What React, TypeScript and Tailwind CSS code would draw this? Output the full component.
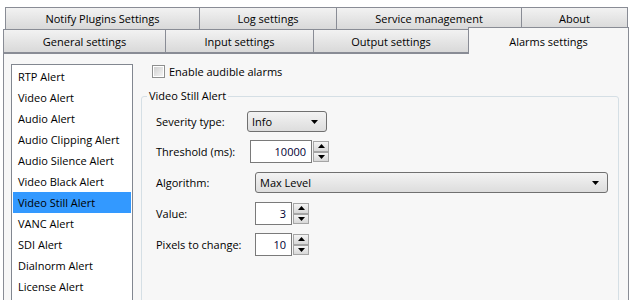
import React from "react";

const TOP_TABS = [
  { label: "Notify Plugins Settings", w: "w-[195px]" },
  { label: "Log settings", w: "w-[138px]" },
  { label: "Service management", w: "w-[186px]" },
  { label: "About", w: "w-[107px]" },
];

const BOTTOM_TABS = [
  { label: "General settings", w: "w-[163px]" },
  { label: "Input settings", w: "w-[149px]" },
  { label: "Output settings", w: "w-[156px]" },
];

const ALERTS = [
  "RTP Alert",
  "Video Alert",
  "Audio Alert",
  "Audio Clipping Alert",
  "Audio Silence Alert",
  "Video Black Alert",
  "Video Still Alert",
  "VANC Alert",
  "SDI Alert",
  "Dialnorm Alert",
  "License Alert",
];

function Tab({ label, w }: { label: string; w: string }) {
  return (
    <div
      className={`${w} -mr-px flex h-full items-center justify-center border border-[#898c95] bg-gradient-to-b from-[#f2f2f2] to-[#d9d9d9] text-black`}
    >
      {label}
    </div>
  );
}

function Caret() {
  return (
    <svg width="7" height="4" viewBox="0 0 7 4" className="shrink-0">
      <path d="M0 0h7L3.5 4z" fill="#000" />
    </svg>
  );
}

function Select({ value, w }: { value: string; w: string }) {
  return (
    <div
      className={`${w} flex h-[21px] items-center justify-between rounded-[3px] border border-[#707070] bg-gradient-to-b from-[#f3f3f3] to-[#dddddd] pl-[4px] pr-[8px] text-black`}
    >
      <span>{value}</span>
      <Caret />
    </div>
  );
}

function SpinArrow({ up }: { up?: boolean }) {
  return (
    <div className="flex flex-1 items-center justify-center border border-[#a5a5a5] bg-gradient-to-b from-[#f4f4f4] to-[#d8d8d8]">
      <svg width="7" height="4" viewBox="0 0 7 4">
        <path d={up ? "M0 4h7L3.5 0z" : "M0 0h7L3.5 4z"} fill="#000" />
      </svg>
    </div>
  );
}

function Spin({ value, w }: { value: string; w: string }) {
  return (
    <div className="flex h-[23px]">
      <div
        className={`${w} flex items-center justify-end border border-[#7a7a7a] bg-white pr-[5px] text-[#000033]`}
      >
        {value}
      </div>
      <div className="flex w-[17px] flex-col py-px pl-px">
        <SpinArrow up />
        <SpinArrow />
      </div>
    </div>
  );
}

export default function App() {
  return (
    <div
      className="relative h-[300px] w-[637px] overflow-hidden bg-white text-[11px] leading-none text-black"
      style={{ fontFamily: '"Open Sans", "Noto Sans", sans-serif' }}
    >
      <div className="pt-[7px]">
        <div className="ml-[5px] flex h-[23px]">
          {TOP_TABS.map((t) => (
            <Tab key={t.label} {...t} />
          ))}
        </div>
        <div className="-mt-px ml-[3px] flex h-[24px] items-end">
          {BOTTOM_TABS.map((t) => (
            <Tab key={t.label} {...t} />
          ))}
          <div className="relative z-10 -mb-px flex h-[27px] w-[161px] items-start justify-center border border-b-0 border-[#898c95] bg-[#f7f7f7] pt-[8px]">
            Alarms settings
          </div>
        </div>
      </div>

      <div className="ml-[3px] flex h-[260px] w-[626px] border border-b-0 border-[#898c95] bg-[#f7f7f7]">
        <div className="ml-[7px] mt-[10px] h-[260px] w-[122px] border border-[#828790] bg-white p-px">
          {ALERTS.map((a) => (
            <div
              key={a}
              className={`flex h-[21px] items-center pl-[5px] ${
                a === "Video Still Alert" ? "bg-[#3399ff]" : ""
              }`}
            >
              {a}
            </div>
          ))}
        </div>

        <div className="ml-[8px] flex flex-1 flex-col">
          <div className="ml-[11px] mt-[11px] flex items-center gap-[4px]">
            <div className="flex h-[13px] w-[13px] items-center justify-center border border-[#8e8f8f] bg-white">
              <div className="h-[9px] w-[9px] bg-gradient-to-br from-[#d0d0d0] to-[#f4f4f4]" />
            </div>
            <span>Enable audible alarms</span>
          </div>

          <div className="relative mt-[18px] h-[220px] w-[478px] rounded-[3px] border border-[#d5dfe5]">
            <span className="absolute -top-[7px] left-[5px] bg-[#f7f7f7] px-[2px]">
              Video Still Alert
            </span>

            <div className="ml-[14px] mt-[14px] flex items-center">
              <span className="w-[91px]">Severity type:</span>
              <Select value="Info" w="w-[80px]" />
            </div>

            <div className="ml-[14px] mt-[8px] flex items-center">
              <span className="w-[94px]">Threshold (ms):</span>
              <Spin value="10000" w="w-[62px]" />
            </div>

            <div className="ml-[14px] mt-[9px] flex items-center">
              <span className="w-[99px]">Algorithm:</span>
              <Select value="Max Level" w="w-[353px]" />
            </div>

            <div className="ml-[14px] mt-[9px] flex items-center">
              <span className="w-[99px]">Value:</span>
              <Spin value="3" w="w-[37px]" />
            </div>

            <div className="ml-[14px] mt-[8px] flex items-center">
              <span className="w-[99px]">Pixels to change:</span>
              <Spin value="10" w="w-[37px]" />
            </div>
          </div>
        </div>
      </div>
    </div>
  );
}
